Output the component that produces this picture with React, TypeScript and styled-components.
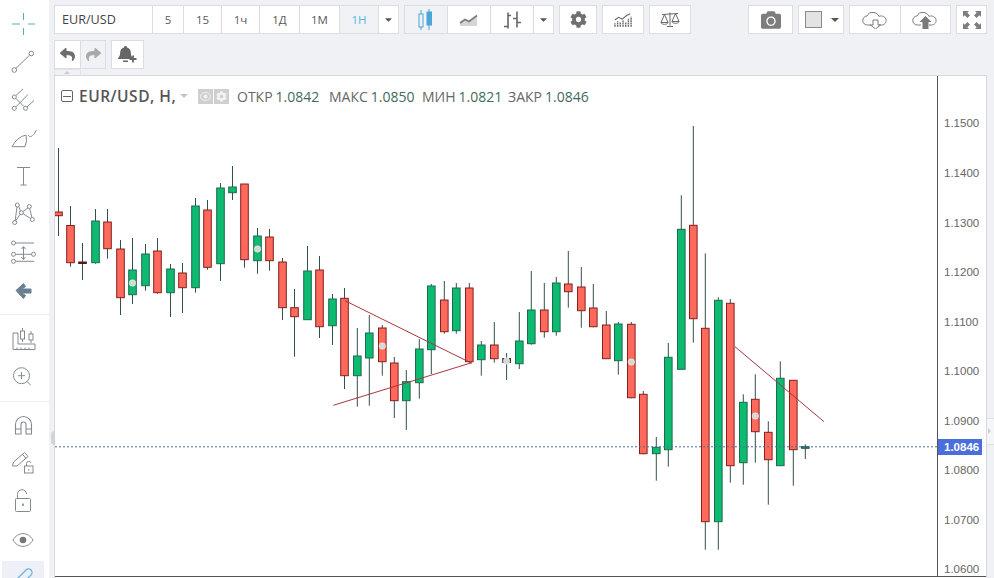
import React from "react";
import styled, { createGlobalStyle } from "styled-components";
import { FaCog, FaCamera, FaReply, FaShare, FaCaretDown } from "react-icons/fa";

const Global = createGlobalStyle`
  html, body { margin: 0; padding: 0; background: #f0f1f5; }
  #root { width: 994px; height: 578px; overflow: hidden; }
`;

const Page = styled.div`
  position: relative;
  display: flex;
  width: 994px;
  height: 578px;
  overflow: hidden;
  background: #f0f1f5;
  font-family: "Open Sans", "Liberation Sans", sans-serif;
`;

const Sidebar = styled.aside`
  display: flex;
  flex-direction: column;
  flex: 0 0 49px;
  height: 578px;
  background: #fff;
`;

const ToolSlot = styled.div<{ $mt: number }>`
  flex: 0 0 28px;
  height: 28px;
  margin-top: ${(p) => p.$mt}px;
  svg { display: block; overflow: visible; }
`;

const ActiveSlot = styled.div`
  flex: 0 0 40px;
  width: 42px;
  margin: 7px 0 0 2px;
  background: #edf1f7;
  svg { display: block; overflow: visible; margin: 0 0 0 -2px; }
`;

const SideRule = styled.hr<{ $mt: number }>`
  flex: 0 0 1px;
  width: 100%;
  margin: ${(p) => p.$mt}px 0 0;
  border: 0;
  background: #eeeef0;
`;

const Main = styled.main`
  display: flex;
  flex-direction: column;
  flex: 1;
  min-width: 0;
  padding: 5px 7px 0 5px;
`;

const Bar = styled.div`
  display: flex;
  flex: 0 0 29px;
  gap: 5px;
`;

const Bar2 = styled(Bar)`
  margin-top: 6px;
`;

const Spacer = styled.div`
  flex: 1;
`;

const Group = styled.div`
  display: flex;
  height: 29px;
  box-sizing: border-box;
  border: 1px solid #dcdde2;
  background: #fff;
`;

const Btn = styled.div<{ $w: number; $active?: boolean; $muted?: boolean }>`
  display: flex;
  align-items: center;
  justify-content: center;
  box-sizing: border-box;
  flex: 0 0 ${(p) => p.$w}px;
  height: 27px;
  font-size: 12px;
  color: ${(p) => (p.$active ? "#45a5d8" : "#555")};
  background: ${(p) => (p.$active || p.$muted ? "#f0f2f5" : "#fff")};
  & + & { border-left: 1px solid #dcdde2; }
  svg { display: block; }
`;

const Symbol = styled(Btn)`
  justify-content: flex-start;
  padding-left: 7px;
  font-size: 12.6px;
  color: #444;
`;

const Tf = styled(Btn)`
  font-weight: 500;
  font-size: 11.5px;
  color: ${(p) => (p.$active ? "#5cb3e0" : "#5a5a5a")};
`;

const Caret = styled(FaCaretDown)`
  width: 11px;
  height: 11px;
  color: #555;
`;

const ChartFrame = styled.section`
  position: relative;
  display: flex;
  flex: 1;
  margin-top: 6px;
  width: 933px;
  background: #fff;
  border-top: 1px solid #d9dade;
  border-right: 1px solid #d9dade;
  border-left: 1px solid #d9dade;
  box-sizing: border-box;
  svg { display: block; }
`;

const Tab = styled.div`
  position: absolute;
  left: 54px;
  top: 69px;
  width: 27px;
  height: 6px;
  border: 1px solid #e2e3e7;
  border-bottom: 0;
  box-sizing: border-box;
  background: #f0f1f5;
  &::after {
    content: "";
    position: absolute;
    left: 9px;
    top: 1px;
    border: 3px solid transparent;
    border-top: 0;
    border-bottom: 3px solid #c9cacf;
  }
`;

const SideHandle = styled.div`
  position: absolute;
  left: 51px;
  top: 431px;
  width: 4px;
  height: 14px;
  border-radius: 4px 0 0 4px;
  background: #d3d4d8;
`;

const RightHandle = styled.div`
  position: absolute;
  left: 987px;
  top: 418px;
  width: 7px;
  height: 27px;
  box-sizing: border-box;
  background: #f5f6f8;
  border-top: 1px solid #dfe0e4;
  border-bottom: 1px solid #dfe0e4;
  &::after {
    content: "";
    position: absolute;
    left: 1px;
    top: 9px;
    border: 3px solid transparent;
    border-right: 0;
    border-left: 3px solid #cfd0d5;
  }
`;

const Legend = styled.div`
  position: absolute;
  left: 6px;
  top: 10px;
  display: flex;
  align-items: center;
  height: 20px;
  white-space: nowrap;
`;

const Toggle = styled.span`
  flex: 0 0 12px;
  height: 12px;
  box-sizing: border-box;
  border: 1px solid #666;
  border-radius: 2px;
  display: flex;
  align-items: center;
  justify-content: center;
  margin-right: 6px;
  &::before { content: ""; width: 8px; height: 1px; background: #666; }
`;

const Title = styled.span`
  font-size: 15.5px;
  font-weight: 600;
  color: #555;
  letter-spacing: 0.5px;
  width: 101px;
`;

const LegendCaret = styled.span`
  width: 0;
  height: 0;
  border: 4px solid transparent;
  border-top: 4px solid #c5c5c5;
  border-bottom: 0;
  margin-right: 10px;
`;

const Square = styled.span`
  flex: 0 0 15px;
  height: 15px;
  margin-right: 1px;
  display: flex;
  align-items: center;
  justify-content: center;
  background: #cfcfcf;
  color: #f3f3f3;
  svg { display: block; }
`;

const Stat = styled.span<{ $w: number }>`
  flex: 0 0 ${(p) => p.$w}px;
  font-size: 14px;
  color: #666;
`;

const Value = styled.span`
  color: #436a5e;
  margin-left: 3px;
`;

type Kind = "g" | "r" | "d" | "m";
type C = [number, Kind, number, number, number, number, number?];
// x, colour, body top, body bottom, wick top, wick bottom, marker y
const CANDLES: C[] = [
  [58.5,"r",212,215.7,148,236],[70.5,"r",225.5,262.7,206,266.7],[82.5,"m",262,263.5,243,280],
  [95.5,"g",221,262.7,209,263.7],[107.5,"r",222,248.7,209,258.7],[120.5,"r",249,297.7,240,315],
  [132.5,"g",270,294.7,238,304,283],[145.5,"g",254,285.7,244,290.7],[157.5,"r",251,292.7,238,293.7],
  [170.5,"g",269,292.7,264,317],[182.5,"r",273,287.7,263,313],[195.5,"g",206,287.7,198,292.7],
  [207.5,"r",210,267.3,200,269.7],[220.5,"g",188,263.7,183,281],[232.5,"g",187,192.7,166,200],
  [244.5,"r",184,259.7,184,267.7],[257.5,"g",236,260.7,228,273.7,249],[269.5,"r",237,260.7,229,270.7],
  [282.5,"r",262,307.7,258,320],[294.5,"r",307.7,316.7,289,356.7],[307.5,"g",271,319.7,246,319.7],
  [319.5,"r",270,326.7,256,338],[332.5,"g",299,325.7,294,345],[344.5,"r",298.3,375.7,288,389],
  [357.3,"g",356,375.7,328,406.7],[369.3,"g",333,358,315,405.7],[382.3,"r",328,361.7,325,375.7,346],
  [394.3,"r",363,400.7,357,418],[406.3,"g",381.7,400.7,370,430],[419.3,"g",349,382.7,339,398.7],
  [431.3,"g",286,349.7,284,374],[444.3,"r",300,331.7,281,333.7],[456.3,"g",288,330.7,283,333.7],
  [469.3,"r",288,361.7,283,361.7],[481.3,"g",345,359.7,341,375.7],[494.3,"r",345,358.7,322,362.7],
  [506.6,"m",358.5,362.5,353,380,361],[519.3,"g",341,363.7,312,369],[531.3,"g",310,343.7,271,344.7],
  [544.3,"r",310,331.7,283,337.7],[556.3,"g",283,331.7,277,335.7],[568.3,"r",284,291.7,251,307.7],
  [581.3,"r",287,310.7,267,327.7],[593.3,"r",308,326.7,284,327.3],[606.3,"r",325,358.7,311,359],
  [618.3,"g",324,360.7,322,374.7],[631.3,"r",324.3,397.7,322,398.3,362],[643.3,"r",394.3,453.7,391,454.3],
  [656.3,"g",447.3,453.7,437,480.7],[668.3,"g",357.3,449.7,343,466.7],[681.3,"g",229.3,369.3,195.3,369.3],
  [693.3,"r",225.3,318.7,126,342.7],[705.3,"r",328.3,521.7,253.3,549.7],[718.3,"g",300.3,521.7,297.3,549.7],
  [730.3,"r",303.3,465.7,299,482.7],[743.3,"g",402.3,462.7,394.3,484.7],[755.3,"r",399.3,431.7,374.3,462.7,416],
  [768.3,"r",432.3,459.7,421.3,504.7],[780.3,"g",378.3,465.7,361.3,465.7],[793.3,"r",380.3,449.7,380,485.7],
  [805.3,"d",446.7,448.3,444.3,459],
];

const FILL: Record<Kind, string> = { g: "#0dbb70", r: "#ff695c", d: "#1f8a78", m: "#6b1f1c" };
const EDGE: Record<Kind, string> = { g: "#1c6a50", r: "#84211d", d: "#1d5a50", m: "#4e1a18" };
const SCALE: [string, number][] = [
  ["1.1500",123],["1.1400",173],["1.1300",223],["1.1200",272],["1.1100",322],
  ["1.1000",371],["1.0900",421],["1.0800",470],["1.0700",520],["1.0600",569],
];

const AxisText = styled.text`
  font-family: "Liberation Sans", Arial, sans-serif;
  font-size: 11.5px;
  fill: #666;
`;

const PriceTag = styled.text`
  font-family: "Liberation Sans", Arial, sans-serif;
  font-size: 11.5px;
  font-weight: 700;
  fill: #fff;
`;

function Chart() {
  return (
    <svg width={931} height={501} viewBox="55 76 931 501">
      <rect x="55" y="76" width="931" height="501" fill="#fff" />
      {CANDLES.map(([x, c, t, b, wt, wb], i) => (
        <g key={i}>
          <line x1={x} x2={x} y1={wt} y2={wb} stroke="#33504a" strokeWidth="1" />
          <rect x={x - 3.8} y={t} width={7.6} height={b - t} fill={FILL[c]} stroke={EDGE[c]} strokeWidth="1" />
        </g>
      ))}
      {CANDLES.filter((k) => k[6]).map((k, i) => (
        <circle key={i} cx={k[0]} cy={k[6]} r="3.2" fill="#d6d8d6" stroke="#ececec" strokeWidth="0.6" />
      ))}
      <g stroke="#a8353f" strokeWidth="1" fill="none">
        <line x1="345" y1="300.7" x2="471.7" y2="363.3" />
        <line x1="333.3" y1="405.3" x2="471.7" y2="362.7" />
        <line x1="735" y1="346.7" x2="824" y2="421.7" />
      </g>
      <line x1="55" x2="937" y1="446.8" y2="446.8" stroke="#4e6f95" strokeWidth="1" strokeDasharray="2 2" />
      <line x1="937.5" x2="937.5" y1="76" y2="577" stroke="#555" strokeWidth="1" />
      <line x1="55" x2="986" y1="576.5" y2="576.5" stroke="#555" strokeWidth="1" />
      {SCALE.map(([t, y]) => (
        <AxisText key={t} x="944" y={y + 4}>{t}</AxisText>
      ))}
      <rect x="938" y="439" width="44" height="16" fill="#4a6fdc" />
      <PriceTag x="944" y="451">1.0846</PriceTag>
    </svg>
  );
}

function Tool({ c, mt, children }: { c: number; mt: number; children: React.ReactNode }) {
  return (
    <ToolSlot $mt={mt}>
      <svg width={49} height={28} viewBox={`0 ${c - 14} 49 28`} fill="none" stroke="#858a8e" strokeWidth="1">
        {children}
      </svg>
    </ToolSlot>
  );
}

export default function App() {
  return (
    <Page>
      <Global />
      <Sidebar>
        <Tool c={24} mt={10}>
          <path d="M23.5 13v7M23.5 28v7M12 24h8M28 24h7" stroke="#5fa7c4" />
        </Tool>
        <Tool c={61} mt={9}>
          <circle cx="14.3" cy="70" r="2.3" />
          <circle cx="31.3" cy="53.5" r="2.3" />
          <line x1="16" y1="68.3" x2="29.6" y2="55.2" />
        </Tool>
        <Tool c={97} mt={8}>
          <circle cx="14.3" cy="97" r="2" /><circle cx="14.3" cy="108.3" r="2" /><circle cx="25.5" cy="108.3" r="2" />
          <path d="M16 95.5l7-6.5M16 106.800L28 94.500M27 107l7-6.500M16 98.500l8 8" />
        </Tool>
        <Tool c={141} mt={16}>
          <path d="M12 146.700Q17 137 26 135Q27.500 141 25 146.700z" />
          <path d="M28.300 135c1 3 5 2 8-5" />
        </Tool>
        <Tool c={176} mt={7}>
          <path d="M17 167.500h13M23.500 167.500v17.500M20.500 185h6" />
        </Tool>
        <Tool c={213} mt={9}>
          <circle cx="14.7" cy="222.5" r="2" /><circle cx="17.3" cy="205" r="2" /><circle cx="29.3" cy="206.5" r="2" />
          <circle cx="32.3" cy="219.5" r="2" /><circle cx="21.3" cy="212.7" r="2" />
          <path d="M15.200 220.500L17 207M18.800 206.500l1.600 4.400M15.800 220.800L20 214.400M23 211.500l5-3.700M29.700 208.500l2.200 9M23.200 213.800l7.300 4.600" />
        </Tool>
        <Tool c={253} mt={12}>
          <circle cx="13.5" cy="243" r="2" /><circle cx="13.5" cy="254.3" r="2" /><circle cx="33.5" cy="254.3" r="2" /><circle cx="13.5" cy="261.3" r="2" />
          <path d="M15.500 243h18.500M15.500 254.300h16M15.500 261.300h18.500M23.500 247v12M21.500 249l2-2.500 2 2.500M21.500 257l2 2.500 2-2.500" />
        </Tool>
        <Tool c={291} mt={10}>
          <path d="M16 290.500L23.500 283.500L25.500 286.500L22 289H31V293H22L25.500 295.500L23.500 298.500Z" fill="#6b7f92" stroke="#6b7f92" strokeLinejoin="round" />
        </Tool>
        <SideRule $mt={9} />
        <Tool c={339} mt={10}>
          <path d="M13 333v16.500h22V344h-17v-11zM17 349.500v-2M21 349.500v-2M25 349.500v-2M29 349.500v-2" />
          <rect x="20.5" y="331" width="4" height="8" /><path d="M22.500 328v3M22.500 339v3" />
          <rect x="29" y="334" width="4" height="6" /><path d="M31 331v3M31 340v3" />
        </Tool>
        <Tool c={376} mt={9}>
          <circle cx="21.5" cy="375.7" r="8" /><path d="M27 381.500l3.700 3.700M18 375.700h7M21.500 372.200v7" />
        </Tool>
        <SideRule $mt={11} />
        <Tool c={425} mt={9}>
          <path d="M15.500 434v-9.500a8 8 0 0 1 16 0V434h-5.500v-9.500a2.500 2.500 0 0 0-5 0V434zM15.500 429h5.500M26 429h5.500" strokeWidth="1.1" />
        </Tool>
        <Tool c={461} mt={8}>
          <path d="M12.500 466l1-4 11-9.500 3.500 4-11 9.500zM22.500 454.300l3.500 4" />
          <rect x="24.5" y="466" width="8.5" height="7" /><path d="M26.500 466v-2.500a2.300 2.300 0 0 1 4.500-.5" /><path d="M28.700 469v1.500" />
        </Tool>
        <Tool c={505} mt={16}>
          <rect x="15.5" y="498.5" width="15" height="13" rx="1" /><path d="M17.500 498.500v-4a4.500 4.500 0 0 1 9-.5" /><path d="M23 503.500v2.500" strokeWidth="1.6" />
        </Tool>
        <Tool c={540} mt={7}>
          <path d="M13 540c5-8.500 15-8.500 20 0-5 8.500-15 8.500-20 0z" /><circle cx="23" cy="540" r="3.3" fill="#777" stroke="none" />
        </Tool>
        <ActiveSlot>
          <svg width={49} height={40} viewBox="0 561 49 40" fill="none" stroke="#6fb2dc" strokeWidth="1.3">
            <path d="M16 580l10-10a3.500 3.500 0 0 1 5 5l-9 9" />
          </svg>
        </ActiveSlot>
      </Sidebar>
      <Main>
        <Bar>
          <Group>
            <Symbol $w={97}>EUR/USD</Symbol>
            <Tf $w={31}>5</Tf>
            <Tf $w={38}>15</Tf>
            <Tf $w={38}>1ч</Tf>
            <Tf $w={40}>1Д</Tf>
            <Tf $w={40}>1М</Tf>
            <Tf $w={39} $active>1Н</Tf>
            <Btn $w={20}><Caret /></Btn>
          </Group>
          <Group>
            <Btn $w={42} $active>
              <svg width="20" height="22" viewBox="0 0 20 22" fill="none" stroke="#4ba6d8">
                <rect x="3" y="5" width="4" height="13" /><path d="M5 1v4M5 18v3" />
                <rect x="11" y="3" width="4.5" height="13" fill="#4ba6d8" /><path d="M13 0v3M13 16v5" />
              </svg>
            </Btn>
            <Btn $w={43}>
              <svg width="20" height="14" viewBox="0 0 20 14">
                <path d="M1 13V10l5-3.500 4 2 8-6V13z" fill="#d5d5d5" />
                <path d="M1 10l5-3.500 4 2 8-6" fill="none" stroke="#7b7b7b" strokeWidth="1.6" />
              </svg>
            </Btn>
            <Btn $w={43}>
              <svg width="20" height="18" viewBox="0 0 20 18" fill="none" stroke="#666" strokeWidth="1.6">
                <path d="M6 1.500v16M2 15.500h4M6 4.500h3M15 0.500v16M11 7.500h4M15 11.500h4" />
              </svg>
            </Btn>
            <Btn $w={20}><Caret /></Btn>
          </Group>
          <Group>
            <Btn $w={36}><FaCog size={17} color="#6f6f6f" /></Btn>
          </Group>
          <Group>
            <Btn $w={40}>
              <svg width="18" height="16" viewBox="0 0 20 16" fill="none" stroke="#6a6a6a">
                <path d="M1 15.500v-4M4 15.500v-6M7 15.500v-5M10 15.500v-7M13 15.500v-5M16 15.500v-9M19 15.500v-11" strokeWidth="1.6" strokeDasharray="2 .6" />
                <path d="M1 8l4-3 4 2 5-4 4-2" strokeWidth="1.2" />
              </svg>
            </Btn>
          </Group>
          <Group>
            <Btn $w={40}>
              <svg width="20" height="16" viewBox="0 0 20 16" fill="none" stroke="#6a6a6a" strokeWidth="1">
                <path d="M10 0.500v13M7 14.500h6M2 2.500l16-1M4.500 2.500L1 10.500h7zM15.500 1.500L12 9.500h7zM1 10.500c.5 2.500 6.500 2.500 7 0M12 9.500c.5 2.500 6.500 2.500 7 0" />
              </svg>
            </Btn>
          </Group>
          <Spacer />
          <Group>
            <Btn $w={43}><FaCamera size={20} color="#7d7d7d" /></Btn>
          </Group>
          <Group>
            <Btn $w={44}>
              <svg width="44" height="18" viewBox="0 0 44 18">
                <rect x="6.5" y="0.5" width="16" height="16" fill="#e3e3e3" stroke="#8a8a8a" />
                <path d="M32 7h8l-4 4z" fill="#555" />
              </svg>
            </Btn>
          </Group>
          <Group>
            <Btn $w={50}>
              <svg width="27" height="18" viewBox="0 0 27 18" fill="none" stroke="#7a7a7a">
                <path d="M9 14H5.500a4.500 4.500 0 0 1-.5-9 6 6 0 0 1 6-3.500c3 0 5 1.500 6 4 1-1 6-1 7 3 .6 3-1.500 5.500-4.500 5.500H17" />
                <path d="M11 9h5v5h2.500l-5 4-5-4H11z" />
              </svg>
            </Btn>
            <Btn $w={50}>
              <svg width="27" height="18" viewBox="0 0 27 18" fill="none" stroke="#7a7a7a">
                <path d="M9 14H5.500a4.500 4.500 0 0 1-.5-9 6 6 0 0 1 6-3.500c3 0 5 1.500 6 4 1-1 6-1 7 3 .6 3-1.500 5.500-4.500 5.500H17" />
                <path d="M13.500 5l6 6H16.500v7h-6v-7H7.500z" fill="#7a7a7a" stroke="none" />
              </svg>
            </Btn>
          </Group>
          <Group>
            <Btn $w={29}>
              <svg width="18" height="18" viewBox="0 0 18 18" fill="#7d7d7d">
                <path d="M0 0h6L4.300 1.700 7 4.400 4.400 7 1.700 4.300 0 6zM18 0v6l-1.700-1.700L13.600 7 11 4.400l2.700-2.700L12 0zM0 18v-6l1.700 1.700L4.400 11 7 13.600l-2.700 2.700L6 18zM18 18h-6l1.700-1.700L11 13.600 13.600 11l2.700 2.700L18 12z" />
              </svg>
            </Btn>
          </Group>
        </Bar>
        <Bar2>
          <Group>
            <Btn $w={25}><FaReply size={15} color="#6e6e6e" /></Btn>
            <Btn $w={25} $muted><FaShare size={15} color="#a9a9a9" /></Btn>
          </Group>
          <Group>
            <Btn $w={31}>
              <svg width="20" height="18" viewBox="0 0 20 18">
                <path d="M7.500 0c.9 0 1.500.6 1.500 1.400 2.500.6 3.800 2.600 3.800 5.100 0 3 1 4.600 2.200 5.500v1H0v-1c1.200-.9 2.200-2.500 2.200-5.500 0-2.500 1.300-4.500 3.800-5.100C6 .6 6.600 0 7.500 0zM5 14.500h5V16H5z" fill="#666" />
                <path d="M15 9.500v7M11.500 13h7" stroke="#666" strokeWidth="1.8" />
              </svg>
            </Btn>
          </Group>
        </Bar2>
        <ChartFrame>
          <Chart />
          <Legend>
            <Toggle />
            <Title>EUR/USD, H,</Title>
            <LegendCaret />
            <Square>
              <svg width="11" height="9" viewBox="0 0 11 9"><ellipse cx="5.5" cy="4.5" rx="5" ry="4" fill="none" stroke="#f3f3f3" /><circle cx="5.5" cy="4.5" r="2" fill="#f3f3f3" /></svg>
            </Square>
            <Square><FaCog size={11} /></Square>
            <Stat $w={7} />
            <Stat $w={92}>ОТКР<Value>1.0842</Value></Stat>
            <Stat $w={93}>МАКС<Value>1.0850</Value></Stat>
            <Stat $w={86}>МИН<Value>1.0821</Value></Stat>
            <Stat $w={90}>ЗАКР<Value>1.0846</Value></Stat>
          </Legend>
        </ChartFrame>
      </Main>
      <Tab />
      <SideHandle />
      <RightHandle />
    </Page>
  );
}
